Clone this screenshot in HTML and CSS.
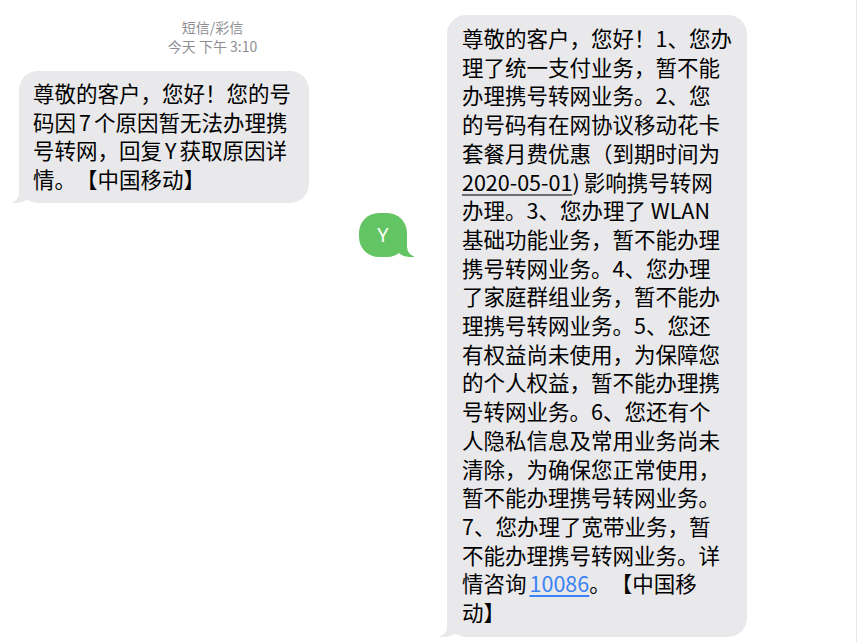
FILE: index.html
```html
<!DOCTYPE html>
<html lang="zh-CN">
<head>
<meta charset="utf-8">
<title>短信/彩信</title>
<link rel="stylesheet" href="styles.css">
</head>
<body>
<div class="page">
  <section class="panel left">
    <header class="meta">
      <div class="meta-title">短信/彩信</div>
      <div class="meta-time">今天 下午 3:10</div>
    </header>
    <div class="bubble received first">尊敬的客户，您好！您的号<br>码因<span class="sp">7</span>个原因暂无法办理携<br>号转网，回复<span class="sp">Y</span>获取原因详<br>情。【中国移动】</div>
    <div class="row-sent">
      <div class="bubble sent">Y</div>
    </div>
  </section>
  <section class="panel right">
    <div class="bubble received long">尊敬的客户，您好！1、您办<br>理了统一支付业务，暂不能<br>办理携号转网业务。2、您<br>的号码有在网协议移动花卡<br>套餐月费优惠（到期时间为<br><span class="date">2020-05-01</span><span class="sp-r">)</span>影响携号转网<br>办理。3、您办理了 WLAN<br>基础功能业务，暂不能办理<br>携号转网业务。4、您办理<br>了家庭群组业务，暂不能办<br>理携号转网业务。5、您还<br>有权益尚未使用，为保障您<br>的个人权益，暂不能办理携<br>号转网业务。6、您还有个<br>人隐私信息及常用业务尚未<br>清除，为确保您正常使用，<br>暂不能办理携号转网业务。<br>7、您办理了宽带业务，暂<br>不能办理携号转网业务。详<br>情咨询<a class="link" href="#">10086</a>。【中国移<br>动】</div>
  </section>
</div>
</body>
</html>
```

FILE: styles.css
```css
html, body {
  margin: 0;
  padding: 0;
  background: #ffffff;
}

body {
  font-family: "Noto Sans CJK SC", "Noto Sans", sans-serif;
  color: #000000;
  width: 860px;
  height: 642px;
  overflow: hidden;
}

.page {
  display: flex;
  height: 642px;
}

.panel {
  display: flex;
  flex-direction: column;
}

.panel.left {
  width: 430px;
}

.panel.right {
  width: 426px;
  border-right: 1px solid #e8e8ea;
}

.meta {
  width: 425px;
  text-align: center;
  color: #8e8e93;
  font-size: 14px;
  line-height: 19px;
  padding-top: 18px;
}

.bubble {
  position: relative;
  box-sizing: border-box;
  background: #e9e9eb;
  border-radius: 19px;
  font-size: 21.5px;
  line-height: 28.7px;
  white-space: nowrap;
  text-spacing-trim: space-all;
}

.bubble.first {
  width: 290px;
  margin-left: 19px;
  margin-top: 15px;
  padding: 8px 14px 9px 14px;
}

.bubble.long {
  width: 300px;
  margin-left: 17px;
  margin-top: 15px;
  padding: 9px 15px 10px 15px;
}

.bubble.received::before {
  content: "";
  position: absolute;
  bottom: 0;
  left: -7px;
  width: 20px;
  height: 20px;
  background: #e9e9eb;
  border-bottom-right-radius: 15px;
}

.bubble.received::after {
  content: "";
  position: absolute;
  bottom: 0;
  left: -10px;
  width: 10px;
  height: 20px;
  background: #ffffff;
  border-bottom-right-radius: 10px;
}

.row-sent {
  display: flex;
  justify-content: flex-end;
  padding-right: 23px;
  margin-top: 10px;
}

.bubble.sent {
  width: 48px;
  height: 44px;
  background: #63c463;
  color: #ffffff;
  border-radius: 20px;
  display: flex;
  align-items: center;
  justify-content: center;
  font-family: "Noto Sans", "Noto Sans CJK SC", sans-serif;
  font-size: 20px;
  line-height: 1;
}

.bubble.sent::before {
  content: "";
  position: absolute;
  bottom: 0;
  right: -7px;
  width: 20px;
  height: 20px;
  background: #63c463;
  border-bottom-left-radius: 15px;
}

.bubble.sent::after {
  content: "";
  position: absolute;
  bottom: 0;
  right: -10px;
  width: 10px;
  height: 20px;
  background: #ffffff;
  border-bottom-left-radius: 10px;
}

.sp {
  margin: 0 3px;
}

.sp-r {
  margin-right: 4px;
}

.date {
  text-decoration: underline;
  text-decoration-color: #6d6d72;
  text-underline-offset: 3px;
}

.link {
  color: #3b82f6;
  text-decoration: underline;
  text-underline-offset: 3px;
  margin-left: 3px;
}
```
